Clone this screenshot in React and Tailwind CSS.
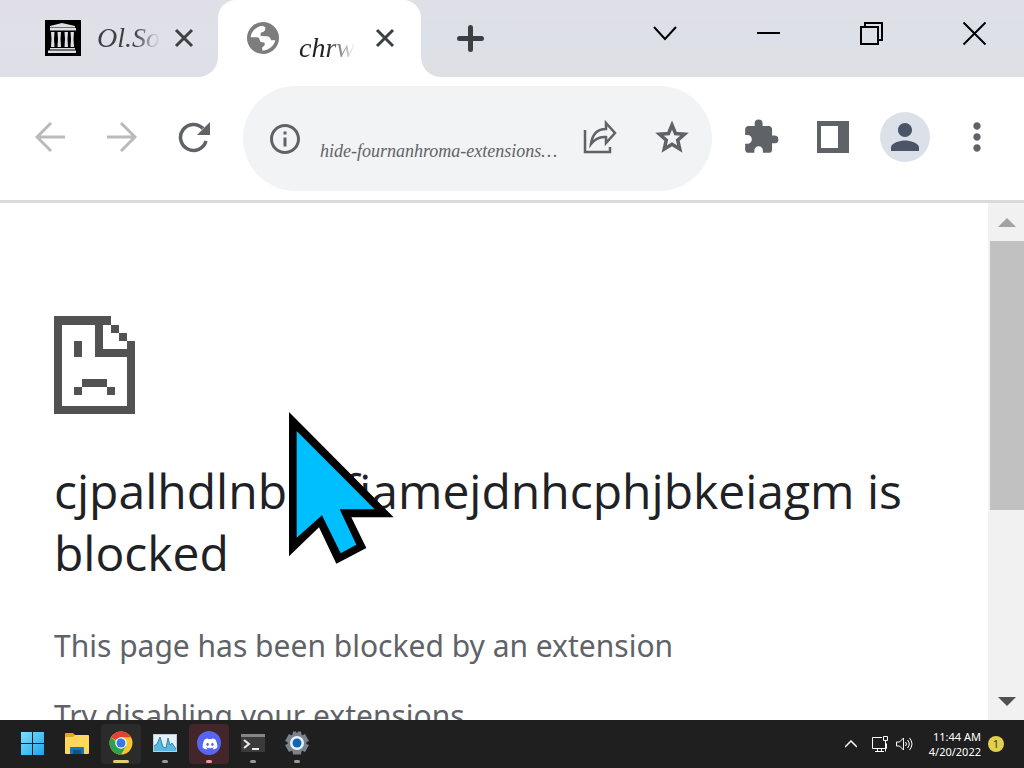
import React from 'react';
import { MdOutlineInfo, MdExtension, MdPerson, MdMoreVert } from 'react-icons/md';
import { FaDiscord } from 'react-icons/fa';

function ArchiveIcon() {
    return (
        <svg viewBox="0 0 36 36" className="w-9 h-9 shrink-0">
            <rect width="36" height="36" fill="#000" />
            <g fill="#dfe0e6">
                <path d="M5 6 L17 3 L30 6 V7.500 H5Z" />
                <rect x="5" y="8" width="26" height="2.500" />
                <path d="M6 12h3.500l-.5 7 .5 8H6l.5-8zM12.500 12h3.500l-.5 7 .5 8h-3.500l.5-8zM19.500 12h3.500l-.5 7 .5 8h-3.500l.5-8zM25.500 12H29l-.5 7 .5 8h-3.500l.5-8z" />
                <rect x="5" y="28" width="25" height="1.500" />
                <rect x="3" y="30.500" width="28" height="2.500" />
            </g>
        </svg>
    );
}

function GlobeIcon() {
    return (
        <svg viewBox="51 66 96 96" className="w-8 h-8 shrink-0">
            <circle cx="99" cy="114" r="48" fill="#7d7d7d" />
            <path
                d="M62 112C63 95 78 80 97 77L106 82L105 91Q103 96 92 98V108L110 109Q121 110 123 121L136 121C132 138 118 150 98 152L96 143L104 136V128L91 125L87 114Q85 112 80 112Z"
                fill="#fff"
            />
        </svg>
    );
}

function CrossIcon() {
    return (
        <svg viewBox="0 0 20 20" className="w-5 h-5" fill="none" stroke="#3c4043" strokeWidth="3">
            <path d="M2 2l16 16M18 2L2 18" />
        </svg>
    );
}

function TabStrip() {
    return (
        <header className="flex h-[77px] shrink-0 bg-gradient-to-b from-[#e0dfe7] via-[#dce0e8] to-[#dfe0e3]">
            <nav className="flex">
                <div className="w-[218px] bg-white">
                    <div className="flex items-center h-full pl-[45px] pr-6 pb-px rounded-br-[20px] bg-gradient-to-b from-[#e0dfe7] via-[#dfe0e8] to-[#dfe0e6]">
                        <ArchiveIcon />
                        <a href="#archive" className="w-16 ml-4 text-[28px] italic font-['Liberation_Serif',serif] whitespace-nowrap bg-gradient-to-r from-[#3c4043] from-60% to-transparent bg-clip-text text-transparent">
                            Ol.So
                        </a>
                        <button aria-label="Close tab" className="ml-3.5"><CrossIcon /></button>
                    </div>
                </div>
                <div className="w-[203px] bg-[#dfe0e6]">
                    <div className="flex items-center h-full pl-[29px] pb-px rounded-t-[18px] bg-white">
                        <GlobeIcon />
                        <a href="#tab" className="w-[56px] ml-5 mr-5 pt-5 text-[28px] italic font-['Liberation_Serif',serif] whitespace-nowrap bg-gradient-to-r from-[#202124] from-50% to-transparent bg-clip-text text-transparent">
                            chrw
                        </a>
                        <button aria-label="Close tab"><CrossIcon /></button>
                    </div>
                </div>
            </nav>
            <div className="flex-1 bg-white">
                <div className="flex items-center h-full pb-px rounded-bl-[20px] bg-gradient-to-b from-[#e0dfe7] via-[#dce0e8] to-[#dfe0e3]">
                    <button aria-label="New tab" className="ml-9">
                        <svg viewBox="0 0 27 27" className="w-[27px] h-[27px]" stroke="#3c4043" strokeWidth="5" strokeLinecap="round">
                            <path d="M2.500 13.500h22M13.500 2.500v22" />
                        </svg>
                    </button>
                    <div className="flex h-full ml-auto pb-2.5">
                        <WindowButton label="Search tabs"><path d="M1 6l11 12L23 6" /></WindowButton>
                        <WindowButton label="Minimize"><path d="M1 12h23" /></WindowButton>
                        <WindowButton label="Restore"><path d="M2 6h17v17H2zM6 6V2h17v17h-4" /></WindowButton>
                        <WindowButton label="Close"><path d="M1.500 1.500l22 22M23.500 1.500l-22 22" /></WindowButton>
                    </div>
                </div>
            </div>
        </header>
    );
}

function WindowButton({ label, children }) {
    return (
        <button aria-label={label} className="w-[103px] h-full flex items-center justify-center pl-[3px]">
            <svg viewBox="0 0 25 25" className="w-[25px] h-[25px]" fill="none" stroke="#000" strokeWidth="2">
                {children}
            </svg>
        </button>
    );
}

function ToolButton({ label, children }) {
    return (
        <button aria-label={label} className="w-[72px] h-[72px] shrink-0 flex items-center justify-center pb-[3px] text-[#5f6368]">
            {children}
        </button>
    );
}

function Toolbar() {
    return (
        <div className="flex items-center h-[126px] shrink-0 pl-3.5 pr-[11px] border-b-3 border-[#dadada] bg-white">
            <ToolButton label="Back">
                <svg viewBox="0 0 30 30" className="w-[30px] h-[30px]" fill="none" stroke="#bababa" strokeWidth="3">
                    <path d="M30 15H2M16 1L2 15l14 14" />
                </svg>
            </ToolButton>
            <ToolButton label="Forward">
                <svg viewBox="0 0 30 30" className="w-[30px] h-[30px]" fill="none" stroke="#bababa" strokeWidth="3">
                    <path d="M0 15h28M14 1l14 14-14 14" />
                </svg>
            </ToolButton>
            <ToolButton label="Reload">
                <svg viewBox="0 0 32 32" className="w-8 h-8">
                    <path d="M28 20A13 13 0 1 1 25 7.500" fill="none" stroke="#5f6368" strokeWidth="3.500" />
                    <path d="M32 1v13H19z" fill="#5f6368" />
                </svg>
            </ToolButton>
            <form className="flex-1 min-w-0 flex items-center h-[105px] mx-[13px] pl-6 pr-1 rounded-full bg-[#f1f3f4] text-[#5f6368]">
                <MdOutlineInfo className="w-9 h-9 shrink-0" />
                <input
                    type="text"
                    aria-label="Address"
                    defaultValue="hide-fournanhroma-extensions…"
                    className="flex-1 min-w-0 ml-[17px] pt-6 text-lg italic font-['Liberation_Serif',serif] bg-transparent outline-none"
                />
                <ToolButton label="Share">
                    <svg viewBox="0 0 34 34" className="w-[34px] h-[34px]" fill="none" stroke="#5f6368" strokeWidth="2.500">
                        <path d="M2 10v22h25v-5" />
                        <path d="M23 3l9 10-9 10v-6Q14 16 8 24Q10 9 23 9Z" />
                    </svg>
                </ToolButton>
                <ToolButton label="Bookmark">
                    <svg viewBox="0 0 34 34" className="w-[34px] h-[34px]" fill="none" stroke="#5f6368" strokeWidth="3.500">
                        <path d="M17 5L20.500 13.500L29.500 14.200L22.700 20.100L24.800 29L17 24.300L9.200 29L11.300 20.100L4.500 14.200L13.500 13.500Z" />
                    </svg>
                </ToolButton>
            </form>
            <ToolButton label="Extensions"><MdExtension className="w-[38px] h-[38px]" /></ToolButton>
            <ToolButton label="Side panel">
                <svg viewBox="0 0 32 32" className="w-8 h-8">
                    <rect width="32" height="32" fill="#5f6368" />
                    <rect x="4" y="5" width="17" height="22" fill="#fff" />
                </svg>
            </ToolButton>
            <ToolButton label="Profile">
                <span className="w-[50px] h-[50px] rounded-full bg-[#dce0e8] flex items-center justify-center">
                    <MdPerson className="w-[42px] h-[42px] text-[#4a5568]" />
                </span>
            </ToolButton>
            <ToolButton label="Menu"><MdMoreVert className="w-11 h-11" /></ToolButton>
        </div>
    );
}

// 10x12 pixel-art page with a sad face
function SadPage() {
    return (
        <svg viewBox="0 0 40 48" className="w-[81px] h-[98px]" fill="#525252" shapeRendering="crispEdges">
            <path d="M0 0h28v4H4v40h32V12h4v36H0z" />
            <path d="M20 4h4v12h12v4H20zM28 4h4v4h-4zM32 8h4v4h-4z" />
            <path d="M10 12h4v8h-4zM14 31h12v4H14zM10 35h4v4h-4zM26 35h4v4h-4z" />
        </svg>
    );
}

function Cursor() {
    return (
        <svg viewBox="88 36 315 456" className="absolute left-[289px] top-[209px] w-[105px] h-[152px] pointer-events-none">
            <path d="M88 36L402 352H275L320 444L230 491L178 382L88 469Z" fill="#000" />
            <path d="M111 93L345 328H240L290 434L243 460L187 346L111 413Z" fill="#00bfff" />
        </svg>
    );
}

function Scrollbar() {
    return (
        <div className="w-9 shrink-0 flex flex-col bg-[#f1f1f1]">
            <button aria-label="Scroll up" className="h-[38px] shrink-0 flex items-center justify-center pl-0.5">
                <svg viewBox="0 0 18 9" className="w-[18px] h-[9px]" fill="#a3a3a3"><path d="M0 9L9 0l9 9z" /></svg>
            </button>
            <div className="flex-1 pl-0.5">
                <div className="h-[61%] bg-[#c1c1c1]" />
            </div>
            <button aria-label="Scroll down" className="h-[38px] shrink-0 flex items-center justify-center pl-0.5">
                <svg viewBox="0 0 18 9" className="w-[18px] h-[9px]" fill="#505050"><path d="M0 0l9 9 9-9z" /></svg>
            </button>
        </div>
    );
}

function TaskButton({ label, className = '', bar = 'w-1.5 bg-[#9a9a9a]', children }) {
    return (
        <button aria-label={label} className={`w-10 h-10 rounded flex flex-col items-center justify-end ${className}`}>
            <svg viewBox="0 0 26 26" className="w-[26px] h-[26px] mb-1">{children}</svg>
            <span className={`h-[3px] mb-px rounded-full ${bar}`} />
        </button>
    );
}

function Taskbar() {
    return (
        <footer className="h-12 shrink-0 flex items-center pl-[13px] pr-5 bg-[#1f1f1f] text-white">
            <div className="flex gap-1">
                <TaskButton label="Start" bar="">
                    <defs>
                        <linearGradient id="win" x1="0" y1="0" x2="1" y2="1">
                            <stop offset="0" stopColor="#7ce0fb" />
                            <stop offset="1" stopColor="#1ba5ec" />
                        </linearGradient>
                    </defs>
                    <path d="M1 2h11v11H1zM13 2h11v11H13zM1 14h11v11H1zM13 14h11v11H13z" fill="url(#win)" />
                </TaskButton>
                <TaskButton label="File Explorer" bar="">
                    <path d="M1 4q0-1 1-1h7l2 2v5H1z" fill="#e5a81d" />
                    <path d="M1 7h8l2-2h13q1 0 1 1v17q0 1-1 1H2q-1 0-1-1z" fill="#ffd75e" />
                    <path d="M6 24v-6q0-1 1-1h12q1 0 1 1v6z" fill="#1673bd" />
                    <path d="M9 20h8v4H9z" fill="#0d5391" />
                </TaskButton>
                <TaskButton label="Chrome" className="bg-[#2b2b2b]" bar="w-4 bg-[#e5cf68]">
                    <circle cx="13" cy="13" r="11.500" fill="#fbc32c" />
                    <path d="M13 13L3 7.300A11.500 11.500 0 0 1 23 7.300H13z" fill="#e64234" />
                    <path d="M3 7.300A11.500 11.500 0 0 0 13 24.500L18 16H13z" fill="#2ca14d" />
                    <circle cx="13" cy="13" r="5.800" fill="#fff" />
                    <circle cx="13" cy="13" r="4.500" fill="#3479e8" />
                </TaskButton>
                <TaskButton label="Performance monitor">
                    <rect x="1" y="4" width="24" height="18" fill="#b9cfda" />
                    <rect x="2" y="5" width="22" height="16" fill="#e4f0f5" />
                    <path d="M2 21v-5l3-2 3-7 3 10 3 1 2-10 2 7 2-2 4 6v2z" fill="#58b8df" />
                    <path d="M2 16l3-2 3-7 3 10 3 1 2-10 2 7 2-2 4 6" fill="none" stroke="#2789b8" />
                </TaskButton>
                <TaskButton label="Discord" className="bg-[#43252a]" bar="w-1.5 bg-[#f29a9a]">
                    <circle cx="13" cy="13" r="12" fill="#5865f2" />
                    <FaDiscord x="6" y="6" width="14" height="14" color="#fff" />
                </TaskButton>
                <TaskButton label="Terminal">
                    <rect x="1" y="4" width="24" height="18" rx="1" fill="#3b3b3b" />
                    <rect x="1" y="4" width="24" height="3" fill="#858585" />
                    <path d="M4 10l5 4-5 4M12 19h7" fill="none" stroke="#eee" strokeWidth="2" />
                </TaskButton>
                <TaskButton label="Settings">
                    <g fill="#7b828a">
                        <circle cx="13" cy="13" r="9.500" />
                        <path d="M9 1.500h3l1 2 1-2h3l1 6H8zM9 24.500h8l1-6H8z" />
                        <path d="M1 11l4-7 6 3-5 6zM25 11l-4-7-6 3 5 6zM1 15l4 7 6-3-5-6zM25 15l-4 7-6-3 5-6z" />
                    </g>
                    <circle cx="13" cy="13" r="7" fill="#e7f4fd" />
                    <circle cx="13" cy="13" r="4.500" fill="#1265b4" />
                </TaskButton>
            </div>
            <div className="ml-auto flex items-center">
                <button aria-label="Show hidden icons">
                    <svg viewBox="0 0 12 8" className="w-3 h-2" fill="none" stroke="#fff" strokeWidth="1.500"><path d="M0 7l6-6 6 6" /></svg>
                </button>
                <svg viewBox="0 0 18 18" className="w-[18px] h-[18px] ml-3.5" fill="none" stroke="#fff">
                    <path d="M11 2.500H1.500v11h14v-5M4 16.500h9M6.500 13.500v3M10.500 13.500v3M12.500 1.500h4v4h-4zM14.500 5.500v11" />
                </svg>
                <svg viewBox="0 0 18 18" className="w-[18px] h-[18px] ml-1.5" fill="none" stroke="#fff">
                    <path d="M1.500 7h3l4-4v12l-4-4h-3zM10.500 7q2 2 0 4M12.500 5q3.500 4 0 8M14.500 3q5 6 0 12" />
                </svg>
                <div className="ml-4 text-right text-[11px] leading-[15px] font-['Noto_Sans',sans-serif]">
                    <p>11:44 AM</p>
                    <p>4/20/2022</p>
                </div>
                <span className="w-4 h-4 ml-[7px] rounded-full bg-[#e3cf4e] text-[#3d3820] text-[11px] leading-4 text-center font-['Noto_Sans',sans-serif]">1</span>
            </div>
        </footer>
    );
}

export default function App() {
    return (
        <div className="h-screen flex flex-col overflow-hidden bg-white">
            <TabStrip />
            <Toolbar />
            <div className="relative flex flex-1 min-h-0">
                <main className="flex-1 min-w-0 overflow-hidden pl-[54px] pr-16 pt-[113px] font-['Open_Sans',sans-serif]">
                    <SadPage />
                    <h1 className="mt-[46px] text-[48px] leading-[62px] text-[#202124] break-words">
                        cjpalhdlnbpafiamejdnhcphjbkeiagm is blocked
                    </h1>
                    <div className="mt-[38px] space-y-[22px] text-[30px] leading-[48px] text-[#5f6368] font-['Noto_Sans',sans-serif]">
                        <p>This page has been blocked by an extension</p>
                        <p>Try disabling your extensions.</p>
                    </div>
                </main>
                <Scrollbar />
                <Cursor />
            </div>
            <Taskbar />
        </div>
    );
}
